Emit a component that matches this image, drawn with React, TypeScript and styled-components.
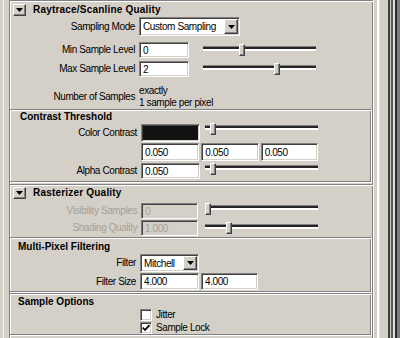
import React from "react";
import styled, { createGlobalStyle, css } from "styled-components";

const face = "#d4d0c8";

const GlobalStyle = createGlobalStyle`
  html, body {
    margin: 0;
    padding: 0;
    background: ${face};
  }
`;

type Sides = { top?: boolean; right?: boolean; bottom?: boolean; left?: boolean };

// etched groove: grey line then white line on every side asked for
const etched = ({ top = false, right = false, bottom = false, left = false }: Sides) => {
    const shadows = [
        top && "inset 0 1px #fff",
        left && "inset 1px 0 #fff",
        bottom && "inset 0 -1px #808080",
        right && "inset -1px 0 #808080",
    ]
        .filter(Boolean)
        .join(", ");
    return css`
        border-style: solid;
        border-color: #808080 #fff #fff #808080;
        border-width: ${top ? 1 : 0}px ${right ? 1 : 0}px ${bottom ? 1 : 0}px ${left ? 1 : 0}px;
        box-shadow: ${shadows || "none"};
    `;
};

const sunken = css`
    box-sizing: border-box;
    border: 1px solid;
    border-color: #808080 #fff #fff #808080;
    box-shadow: inset 1px 1px #404040, inset -1px -1px ${face};
`;

const raised = css`
    box-sizing: border-box;
    border: 1px solid;
    border-color: #fff #404040 #404040 #fff;
    box-shadow: inset -1px -1px #808080;
    background: ${face};
`;

const Page = styled.div`
    display: flex;
    width: 400px;
    height: 338px;
    overflow: hidden;
    background: ${face};
    font-family: "Liberation Sans", Arial, sans-serif;
    font-size: 10px;
    letter-spacing: -0.4px;
    color: #000;
`;

const LeftEdge = styled.div`
    width: 9px;
    flex: none;
    background: linear-gradient(to right, ${face} 0 3px, #f4f3ef 3px 4px, ${face} 4px);
`;

const RightEdge = styled.div`
    flex: 1;
    background: linear-gradient(
        to right,
        ${face} 0 3px,
        #fff 3px 5px,
        #e6e4de 5px 6px,
        ${face} 6px 14px,
        #404040 14px 16px,
        #c8c6c0 16px 17px,
        #5c5c5c 17px 19px,
        #e0deda 19px 21px,
        #2c2c2c 21px 23px,
        #7c7c7c 23px
    );
`;

const Column = styled.div`
    width: 365px;
    flex: none;
    display: flex;
    flex-direction: column;
    box-sizing: border-box;
    ${etched({ left: true, right: true })}
`;

const Frame = styled.section<{ $mt?: number }>`
    display: flex;
    flex-direction: column;
    margin-top: ${(p) => p.$mt ?? 0}px;
    ${etched({ top: true })}
`;

const FrameHeader = styled.div<{ $h: number; $pt: number }>`
    display: flex;
    align-items: flex-start;
    gap: 7px;
    height: ${(p) => p.$h}px;
    padding: ${(p) => p.$pt}px 0 0 3px;
    box-sizing: border-box;
`;

const CollapseButton = styled.div`
    ${raised};
    width: 13px;
    height: 12px;
    display: flex;
    align-items: center;
    justify-content: center;
`;

const FrameTitle = styled.div`
    font-weight: bold;
    line-height: 12px;
    letter-spacing: 0.2px;
`;

const SubBox = styled.div<{ $mt?: number; $pb: number }>`
    margin: ${(p) => p.$mt ?? 0}px 1px 0 0;
    padding-bottom: ${(p) => p.$pb}px;
    ${etched({ top: true, right: true, bottom: true })}
`;

const BoxTitle = styled.div<{ $pt: number; $pl: number }>`
    font-weight: bold;
    line-height: 14px;
    letter-spacing: 0;
    padding: ${(p) => p.$pt}px 0 0 ${(p) => p.$pl}px;
`;

const Row = styled.div<{ $h: number; $mt?: number; $inset?: number }>`
    display: grid;
    grid-template-columns: 125px 60px 113px;
    column-gap: 4px;
    align-items: center;
    height: ${(p) => p.$h}px;
    margin-top: ${(p) => p.$mt ?? 0}px;
    padding-left: ${(p) => p.$inset ?? 0}px;
`;

const Label = styled.div<{ $disabled?: boolean }>`
    grid-column: 1;
    justify-self: end;
    white-space: nowrap;
    line-height: 12px;
    color: ${(p) => (p.$disabled ? "#a4a19b" : "#000")};
`;

const Field = styled.div<{ $w: number; $disabled?: boolean }>`
    ${sunken};
    width: ${(p) => p.$w}px;
    align-self: stretch;
    display: flex;
    align-items: center;
    padding-left: 3px;
    background: ${(p) => (p.$disabled ? face : "#fff")};
    color: ${(p) => (p.$disabled ? "#a4a19b" : "#000")};
    white-space: nowrap;
`;

const FieldGroup = styled.div`
    grid-column: 2 / span 2;
    align-self: stretch;
    display: flex;
    gap: 2px;
`;

const Swatch = styled.div<{ $color: string }>`
    ${sunken};
    width: 59px;
    align-self: stretch;
    background: ${(p) => p.$color};
`;

const Dropdown = styled.div<{ $w: number }>`
    ${sunken};
    grid-column: 2 / span 2;
    width: ${(p) => p.$w}px;
    align-self: stretch;
    display: flex;
    background: #fff;
`;

const DropdownText = styled.div`
    flex: 1;
    display: flex;
    align-items: center;
    padding-left: 3px;
    white-space: nowrap;
    overflow: hidden;
`;

const DropdownArrow = styled.div`
    ${raised};
    width: 14px;
    margin: 1px;
    display: flex;
    align-items: center;
    justify-content: center;
`;

const SliderWrap = styled.div<{ $dy: number }>`
    grid-column: 3;
    position: relative;
    width: 113px;
    height: 12px;
    align-self: start;
    margin-top: ${(p) => p.$dy}px;
`;

const Track = styled.div`
    margin-top: 2px;
    height: 2px;
    background: #262626;
    border-top: 1px solid #808080;
    border-bottom: 2px solid #fff;
`;

const Thumb = styled.div`
    ${raised};
    position: absolute;
    top: 0;
    width: 6px;
    height: 12px;
`;

const TwoLines = styled.div`
    grid-column: 2 / span 2;
    line-height: 12px;
    white-space: nowrap;
`;

const CheckItem = styled.label`
    grid-column: 2 / span 2;
    display: flex;
    align-items: center;
    gap: 4px;
    height: 12px;
    line-height: 12px;
`;

const CheckBox = styled.span`
    ${sunken};
    width: 12px;
    height: 12px;
    background: #fff;
    display: flex;
    align-items: center;
    justify-content: center;
`;

const DownTriangle = () => (
    <svg width="7" height="4" viewBox="0 0 7 4">
        <polygon points="0,0 7,0 3.5,4" fill="#000" />
    </svg>
);

const Slider = ({ pos, dy }: { pos: number; dy: number }) => (
    <SliderWrap $dy={dy}>
        <Track />
        <Thumb style={{ left: pos }} />
    </SliderWrap>
);

const Select = ({ value, w }: { value: string; w: number }) => (
    <Dropdown $w={w}>
        <DropdownText>{value}</DropdownText>
        <DropdownArrow>
            <DownTriangle />
        </DropdownArrow>
    </Dropdown>
);

const Check = ({ label, checked }: { label: string; checked?: boolean }) => (
    <CheckItem>
        <CheckBox>
            {checked && (
                <svg width="8" height="8" viewBox="0 0 8 8">
                    <polyline points="0.8,3.6 3,6 7.4,1.2" fill="none" stroke="#000" strokeWidth="1.8" />
                </svg>
            )}
        </CheckBox>
        {label}
    </CheckItem>
);

export default function App() {
    return (
        <Page>
            <GlobalStyle />
            <LeftEdge />
            <Column>
                <Frame>
                    <FrameHeader $h={16} $pt={3}>
                        <CollapseButton>
                            <DownTriangle />
                        </CollapseButton>
                        <FrameTitle>Raytrace/Scanline Quality</FrameTitle>
                    </FrameHeader>
                    <Row $h={19}>
                        <Label>Sampling Mode</Label>
                        <Select value="Custom Sampling" w={101} />
                    </Row>
                    <Row $h={16} $mt={6}>
                        <Label>Min Sample Level</Label>
                        <Field $w={50}>0</Field>
                        <Slider pos={36} dy={2} />
                    </Row>
                    <Row $h={16} $mt={3}>
                        <Label>Max Sample Level</Label>
                        <Field $w={50}>2</Field>
                        <Slider pos={71} dy={2} />
                    </Row>
                    <Row $h={24} $mt={8}>
                        <Label>Number of Samples</Label>
                        <TwoLines>
                            exactly
                            <br />1 sample per pixel
                        </TwoLines>
                    </Row>
                    <SubBox $pb={3}>
                        <BoxTitle $pt={0} $pl={10}>
                            Contrast Threshold
                        </BoxTitle>
                        <Row $h={18} $inset={2}>
                            <Label>Color Contrast</Label>
                            <Swatch $color="#121212" />
                            <Slider pos={5} dy={-1} />
                        </Row>
                        <Row $h={18} $mt={1} $inset={2}>
                            <FieldGroup>
                                <Field $w={59}>0.050</Field>
                                <Field $w={58}>0.050</Field>
                                <Field $w={58}>0.050</Field>
                            </FieldGroup>
                        </Row>
                        <Row $h={16} $mt={2} $inset={2}>
                            <Label>Alpha Contrast</Label>
                            <Field $w={59}>0.050</Field>
                            <Slider pos={5} dy={0} />
                        </Row>
                    </SubBox>
                </Frame>
                <Frame $mt={1}>
                    <FrameHeader $h={17} $pt={2}>
                        <CollapseButton>
                            <DownTriangle />
                        </CollapseButton>
                        <FrameTitle>Rasterizer Quality</FrameTitle>
                    </FrameHeader>
                    <Row $h={16} $mt={1} $inset={2}>
                        <Label $disabled>Visibility Samples</Label>
                        <Field $w={57} $disabled>
                            0
                        </Field>
                        <Slider pos={0} dy={0} />
                    </Row>
                    <Row $h={16} $mt={1} $inset={2}>
                        <Label $disabled>Shading Quality</Label>
                        <Field $w={57} $disabled>
                            1.000
                        </Field>
                        <Slider pos={21} dy={2} />
                    </Row>
                    <SubBox $mt={1} $pb={2}>
                        <BoxTitle $pt={2} $pl={8}>
                            Multi-Pixel Filtering
                        </BoxTitle>
                        <Row $h={18} $inset={1}>
                            <Label>Filter</Label>
                            <Select value="Mitchell" w={59} />
                        </Row>
                        <Row $h={17} $mt={1} $inset={1}>
                            <Label>Filter Size</Label>
                            <FieldGroup>
                                <Field $w={59}>4.000</Field>
                                <Field $w={57}>4.000</Field>
                            </FieldGroup>
                        </Row>
                    </SubBox>
                    <SubBox $pb={1}>
                        <BoxTitle $pt={1} $pl={8}>
                            Sample Options
                        </BoxTitle>
                        <Row $h={12} $inset={1}>
                            <Check label="Jitter" />
                        </Row>
                        <Row $h={12} $mt={1} $inset={1}>
                            <Check label="Sample Lock" checked />
                        </Row>
                    </SubBox>
                </Frame>
            </Column>
            <RightEdge />
        </Page>
    );
}
